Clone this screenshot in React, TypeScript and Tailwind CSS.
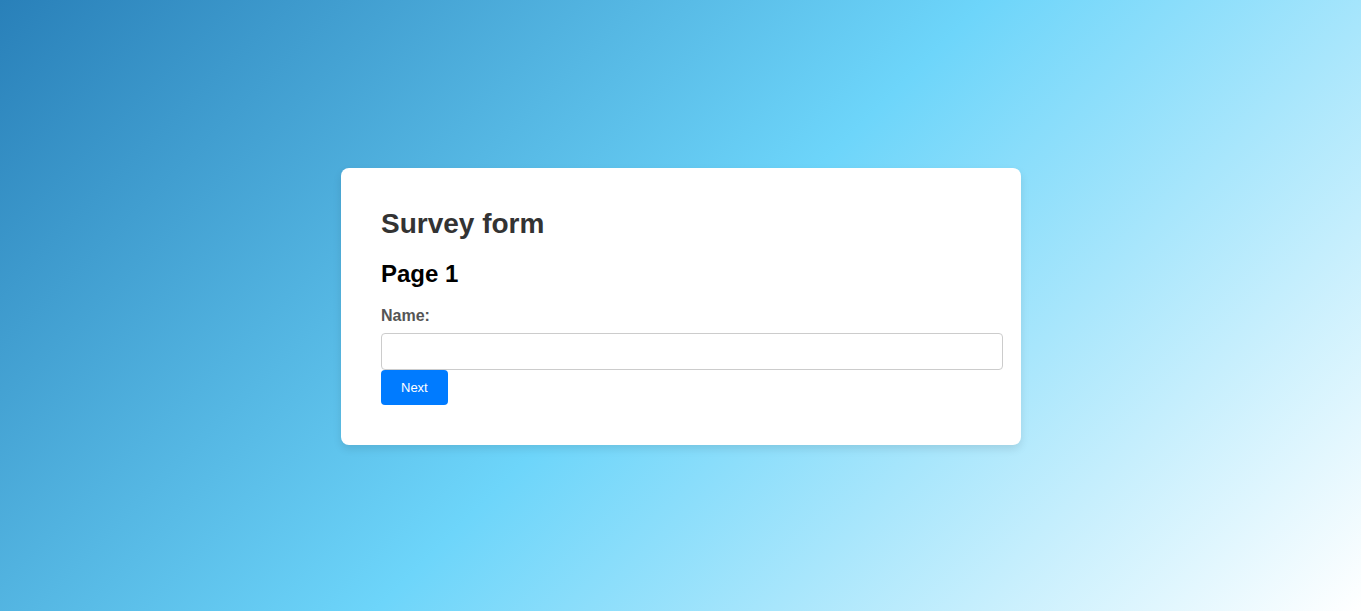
import { useState } from "react";

export default function App() {
  const [name, setName] = useState("");

  return (
    <main className="flex min-h-screen items-center justify-center bg-[linear-gradient(135deg,#2980b9,#6dd5fa,#ffffff)] pt-px pl-px font-['Liberation_Sans',Arial,sans-serif]">
      <form
        className="w-full max-w-[680px] rounded-lg bg-white p-10 shadow-[0_4px_8px_rgba(0,0,0,0.1)]"
        onSubmit={(event) => event.preventDefault()}
      >
        <h1 className="mb-5 text-[28px] leading-8 font-bold text-[#333]">Survey form</h1>
        <h2 className="mb-5 text-2xl leading-[27px] font-bold text-black">Page 1</h2>
        <label htmlFor="name" className="mb-2 block text-base leading-[18px] font-bold text-[#555]">
          Name:
        </label>
        <input
          id="name"
          type="text"
          value={name}
          onChange={(event) => setName(event.target.value)}
          className="block box-content w-full rounded border border-[#ccc] bg-white p-2.5 text-[13px] leading-[15px]"
        />
        <button
          type="submit"
          className="block cursor-pointer rounded bg-[#007bff] px-5 py-2.5 text-[13px] leading-[15px] text-white"
        >
          Next
        </button>
      </form>
    </main>
  );
}
